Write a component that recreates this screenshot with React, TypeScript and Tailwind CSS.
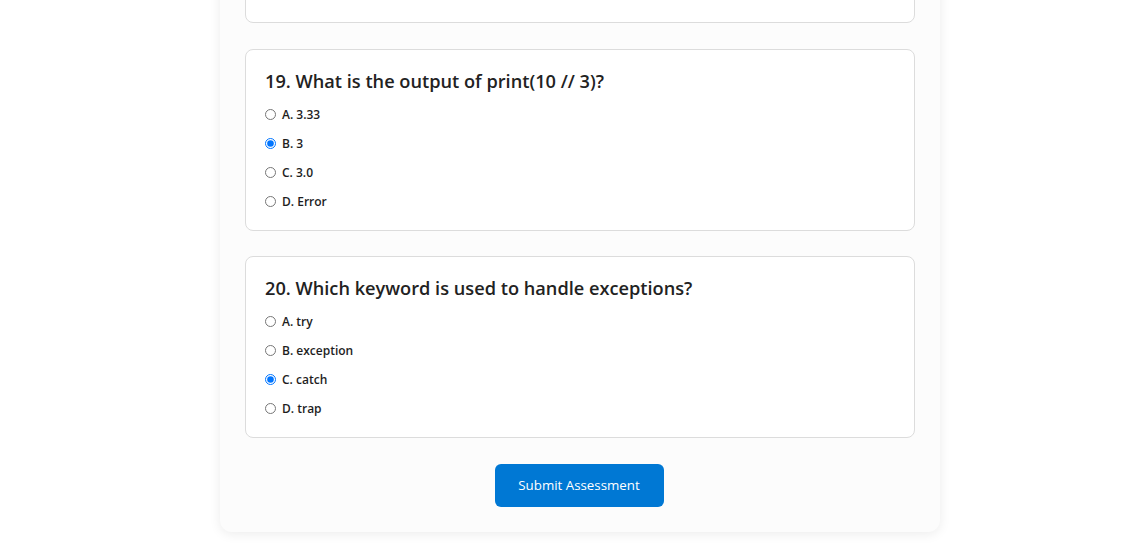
const questions = [
  {
    n: 19,
    q: "What is the output of print(10 // 3)?",
    options: ["A. 3.33", "B. 3", "C. 3.0", "D. Error"],
    picked: 1,
  },
  {
    n: 20,
    q: "Which keyword is used to handle exceptions?",
    options: ["A. try", "B. exception", "C. catch", "D. trap"],
    picked: 2,
  },
]

function QuestionCard({ n, q, options, picked }: { n: number; q: string; options: string[]; picked: number }) {
  return (
    <div className="bg-white border border-[#dcdcdc] rounded-lg p-[19px] mb-[25px]">
      <h3 className="text-[18.2px] leading-[24px] font-semibold text-[#222] mb-3">
        {n}. {q}
      </h3>
      <div className="flex flex-col gap-[10px]">
        {options.map((opt, i) => (
          <label key={opt} className="flex items-center gap-[6px] text-[12px] leading-[19px] font-semibold text-[#1e1e1e]">
            <input type="radio" name={`q${n}`} defaultChecked={i === picked} className="w-[11px] h-[11px] m-0 accent-[#0075ff]" />
            {opt}
          </label>
        ))}
      </div>
    </div>
  )
}

export default function App() {
  return (
    <div className="h-[549px] overflow-hidden bg-white flex flex-col justify-end pl-[39px]" style={{ fontFamily: '"Open Sans", "Noto Sans", sans-serif' }}>
      <div className="w-[720px] mx-auto mb-[17px] bg-[#fcfcfc] rounded-b-xl shadow-[0_2px_12px_rgba(0,0,0,0.08)] px-[25px] pb-[25px]">
        <div className="bg-white border border-[#dcdcdc] rounded-lg p-[19px] mb-[26px] h-[150px]" />
        {questions.map((x) => (
          <QuestionCard key={x.n} {...x} />
        ))}
        <div className="flex justify-center pt-px pr-[2px]">
          <button className="bg-[#0078d4] text-white text-[13.3px] rounded-md w-[169px] h-[43px]">Submit Assessment</button>
        </div>
      </div>
    </div>
  )
}
